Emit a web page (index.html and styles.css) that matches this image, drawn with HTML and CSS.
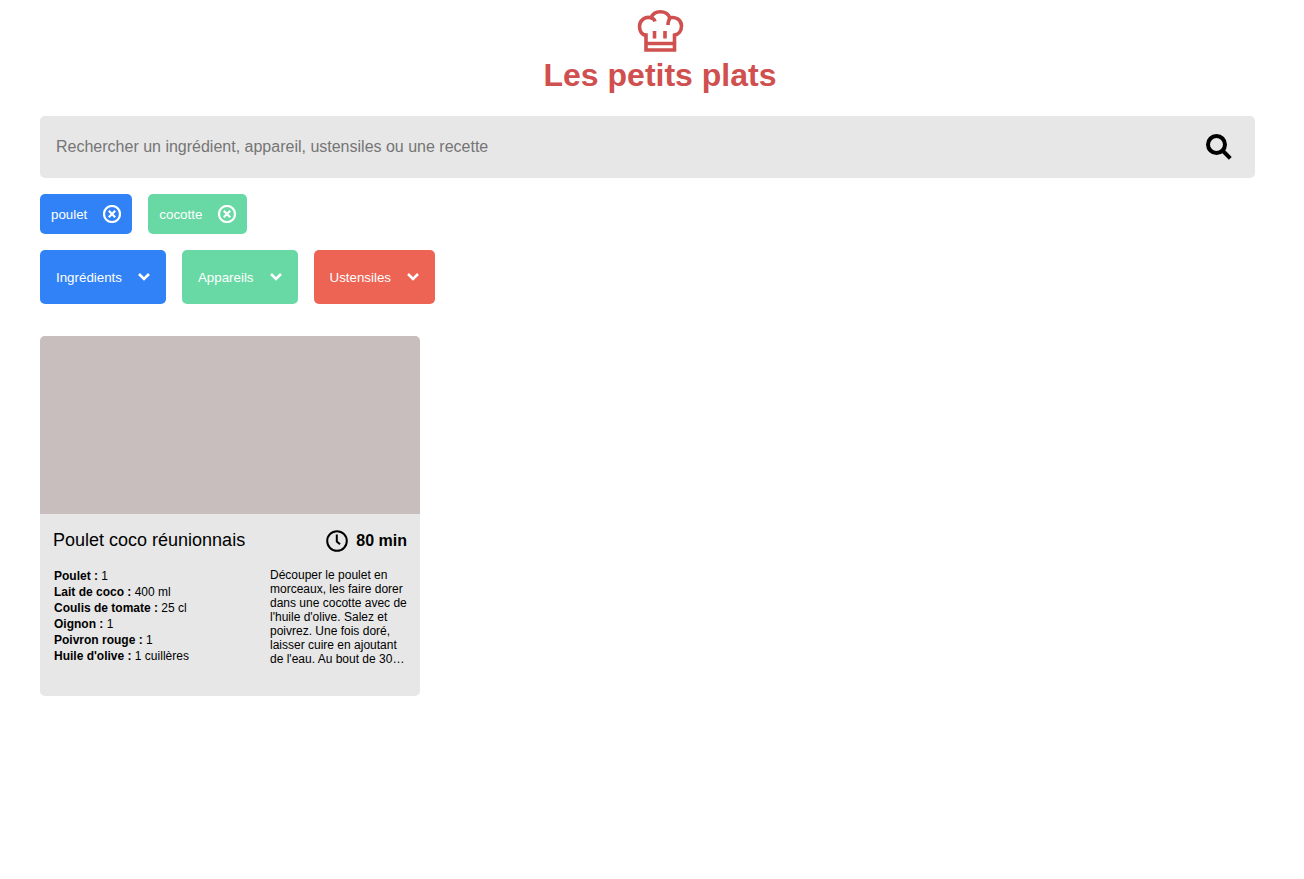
FILE: index.html
```html
<!DOCTYPE html>
<html lang="fr">
<head>
<meta charset="utf-8">
<meta name="viewport" content="width=device-width, initial-scale=1">
<title>Les petits plats</title>
<link rel="stylesheet" href="styles.css">
</head>
<body>
<header class="header">
  <svg class="logo" viewBox="0 0 48 48" aria-hidden="true">
    <path d="M10 42V27C5.500 27 3.500 22.500 3.500 18C3.800 12 9.500 8 15 9.800C16.500 6 20.500 3.800 24.500 3.800C28.500 3.800 32.500 6 33.800 9.800C39 8.500 45.200 11 45.500 17.500C45.600 23 42.500 26.500 38.500 27V42Z"/>
    <path d="M15 9.800C17 10.200 18.400 11.300 19 13.500M33.800 9.800C33.200 12 32 13 32 17M10 35.500H38.500M18.500 23V30.500M29 23V30.500"/>
  </svg>
  <h1 class="title">Les petits plats</h1>
</header>
<main class="main">
  <form class="search" role="search">
    <input class="search-input" type="search" aria-label="Rechercher une recette" placeholder="Rechercher un ingrédient, appareil, ustensiles ou une recette">
    <button class="search-button" type="button" aria-label="Rechercher">
      <svg class="search-icon" viewBox="0 0 26 26" aria-hidden="true"><circle cx="10.500" cy="10.500" r="8.500"/><path d="M16.500 16.500L24.300 24.300"/></svg>
    </button>
  </form>
  <div class="tags">
    <button class="tag blue" type="button">poulet
      <svg class="tag-icon" viewBox="0 0 18 18" aria-hidden="true"><circle cx="9" cy="9" r="8"/><path d="M5.800 5.800L12.200 12.200M12.200 5.800L5.800 12.200"/></svg>
    </button>
    <button class="tag green" type="button">cocotte
      <svg class="tag-icon" viewBox="0 0 18 18" aria-hidden="true"><circle cx="9" cy="9" r="8"/><path d="M5.800 5.800L12.200 12.200M12.200 5.800L5.800 12.200"/></svg>
    </button>
  </div>
  <div class="filters">
    <button class="filter blue" type="button">Ingrédients
      <svg class="chevron" viewBox="0 0 12 12" aria-hidden="true"><path d="M1 3L6 8L11 3"/></svg>
    </button>
    <button class="filter green" type="button">Appareils
      <svg class="chevron" viewBox="0 0 12 12" aria-hidden="true"><path d="M1 3L6 8L11 3"/></svg>
    </button>
    <button class="filter red" type="button">Ustensiles
      <svg class="chevron" viewBox="0 0 12 12" aria-hidden="true"><path d="M1 3L6 8L11 3"/></svg>
    </button>
  </div>
  <section class="recipes" aria-label="Recettes">
    <article class="card">
      <div class="card-image"></div>
      <div class="card-body">
        <div class="card-head">
          <h2 class="card-title">Poulet coco réunionnais</h2>
          <p class="card-time">
            <svg class="clock" viewBox="0 0 22 22" aria-hidden="true"><circle cx="11" cy="11" r="9.800"/><path d="M10.800 4.500V11.500L14 14.300"/></svg>
            80 min
          </p>
        </div>
        <div class="card-details">
          <ul class="ingredients">
            <li><strong>Poulet :</strong> 1</li>
            <li><strong>Lait de coco :</strong> 400 ml</li>
            <li><strong>Coulis de tomate :</strong> 25 cl</li>
            <li><strong>Oignon :</strong> 1</li>
            <li><strong>Poivron rouge :</strong> 1</li>
            <li><strong>Huile d'olive :</strong> 1 cuillères</li>
          </ul>
          <p class="description">Découper le poulet en morceaux, les faire dorer dans une cocotte avec de l'huile d'olive. Salez et poivrez. Une fois doré, laisser cuire en ajoutant de l'eau. Au bout de 30…</p>
        </div>
      </div>
    </article>
  </section>
</main>
</body>
</html>
```
FILE: styles.css
```css
* {
  box-sizing: border-box;
}

body {
  margin: 0;
  background: #fff;
  color: #000;
  font-family: "Liberation Sans", Arial, sans-serif;
}

h1, h2, p, ul {
  margin: 0;
  padding: 0;
}

button {
  border: 0;
  font-family: inherit;
  cursor: pointer;
}

.header {
  display: flex;
  flex-direction: column;
  align-items: center;
  padding: 8px 24px 0 40px;
}

.logo {
  width: 48px;
  height: 48px;
  fill: none;
  stroke: #d04f4f;
  stroke-width: 3.6;
}

.title {
  color: #d04f4f;
  font-size: 32px;
  line-height: 38px;
}

.main {
  display: flex;
  flex-direction: column;
  gap: 16px;
  padding: 22px 49px 40px 40px;
}

.search {
  display: flex;
  height: 62px;
  border-radius: 5px;
  background: #e7e7e7;
}

.search-input {
  flex: 1;
  min-width: 0;
  padding: 0 16px;
  border: 0;
  background: transparent;
  font-family: inherit;
  font-size: 16px;
}

.search-input::placeholder {
  color: #757575;
}

.search-button {
  display: grid;
  place-items: center;
  width: 72px;
  padding: 0;
  background: transparent;
}

.search-icon {
  width: 26px;
  height: 26px;
  fill: none;
  stroke: #000;
  stroke-width: 4;
}

.tags,
.filters {
  display: flex;
  flex-wrap: wrap;
  gap: 16px;
}

.tag,
.filter {
  display: flex;
  align-items: center;
  gap: 16px;
  border-radius: 5px;
  color: #fff;
}

.tag {
  height: 40px;
  padding: 0 11px;
}

.filter {
  height: 54px;
  padding: 0 16px;
}

.blue {
  background: #3282f7;
}

.green {
  background: #68d9a4;
}

.red {
  background: #ed6454;
}

.tag-icon {
  width: 18px;
  height: 18px;
  fill: none;
  stroke: #fff;
  stroke-width: 2.2;
}

.chevron {
  width: 12px;
  height: 12px;
  fill: none;
  stroke: #fff;
  stroke-width: 2.6;
}

.recipes {
  display: grid;
  grid-template-columns: repeat(auto-fill, 380px);
  gap: 36px;
  margin-top: 16px;
}

.card {
  overflow: hidden;
  border-radius: 5px;
  background: #e7e7e7;
}

.card-image {
  height: 178px;
  background: #c8bebd;
}

.card-body {
  padding: 15px 13px 30px;
}

.card-head {
  display: flex;
  justify-content: space-between;
  align-items: flex-start;
}

.card-title {
  font-size: 18px;
  font-weight: 400;
  line-height: 22px;
}

.card-time {
  display: flex;
  align-items: center;
  gap: 8px;
  font-size: 16px;
  font-weight: 700;
  line-height: 24px;
}

.clock {
  width: 22px;
  height: 22px;
  fill: none;
  stroke: #000;
  stroke-width: 2;
}

.card-details {
  display: flex;
  justify-content: space-between;
  padding-top: 15px;
  font-size: 12px;
}

.ingredients {
  padding-left: 1px;
  list-style: none;
  line-height: 16px;
}

.description {
  width: 137px;
  line-height: 14px;
}
```
